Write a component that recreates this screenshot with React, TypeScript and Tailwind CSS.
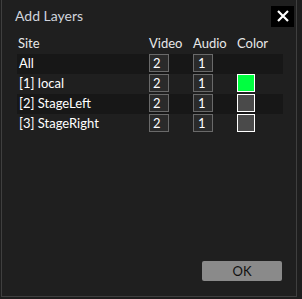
import React from "react";

const rows = [
  { name: "All", video: "2", audio: "1", color: null as string | null, dark: true },
  { name: "[1] local", video: "2", audio: "1", color: "#00ff40", dark: false },
  { name: "[2] StageLeft", video: "2", audio: "1", color: "#4a4a4a", dark: true },
  { name: "[3] StageRight", video: "2", audio: "1", color: "#4a4a4a", dark: false },
];

export default function App() {
  return (
    <div className="w-[302px] h-[299px] bg-[#1e1e1e]" style={{ fontFamily: 'Lato, "Noto Sans", sans-serif' }}>
      <div className="ml-px w-[296px] h-[297px] border-l border-r border-b border-[#3f3f3f] bg-[#1f1f1f] flex flex-col relative">
        <div className="flex items-center justify-between pl-[13px] pr-[2px] pt-[5px] h-[27px]">
          <span className="text-[14px] text-[#d0d4dc] leading-none">Add Layers</span>
          <button className="w-[23px] h-[21px] bg-black flex items-center justify-center">
            <svg width="12" height="12" viewBox="0 0 12 12">
              <path d="M1 1L11 11M11 1L1 11" stroke="white" strokeWidth="2.2" />
            </svg>
          </button>
        </div>
        <div className="pl-[15px] pr-[13px] mt-[6px]">
          <div className="flex h-[21px] items-center text-[13px] text-[#e8e8e8]">
            <span className="w-[132px] pl-px">Site</span>
            <span className="w-[44px]">Video</span>
            <span className="w-[44px]">Audio</span>
            <span>Color</span>
          </div>
          {rows.map((r) => (
            <div
              key={r.name}
              className={`flex h-[20px] items-center text-[13px] text-white ${r.dark ? "bg-[#171717]" : "bg-[#1f1f1f]"}`}
            >
              <span className="w-[132px] pl-[2px]">{r.name}</span>
              <div className="w-[44px] h-[20px] flex items-start">
                <div className="w-[20px] h-[18px] border border-[#6a6a6a] bg-[#2a2a2a] text-white text-[13px] leading-[16px] pl-[3px]">
                  {r.video}
                </div>
              </div>
              <div className="w-[44px] h-[20px] flex items-start">
                <div className="w-[20px] h-[18px] border border-[#6a6a6a] bg-[#2a2a2a] text-white text-[13px] leading-[16px] pl-[4px]">
                  {r.audio}
                </div>
              </div>
              <div className="w-[36px] h-[20px] flex items-start">
                {r.color && (
                  <div
                    className="w-[18px] h-[18px] border-[1.5px] border-white"
                    style={{ backgroundColor: r.color }}
                  />
                )}
              </div>
            </div>
          ))}
        </div>
        <div className="flex-1" />
        <div className="flex justify-end pr-[14px] pb-[15px]">
          <button className="w-[80px] h-[20px] rounded-[2px] bg-[#8a8a8a] text-[13px] text-[#111] leading-none flex items-center justify-center">
            OK
          </button>
        </div>
      </div>
    </div>
  );
}
